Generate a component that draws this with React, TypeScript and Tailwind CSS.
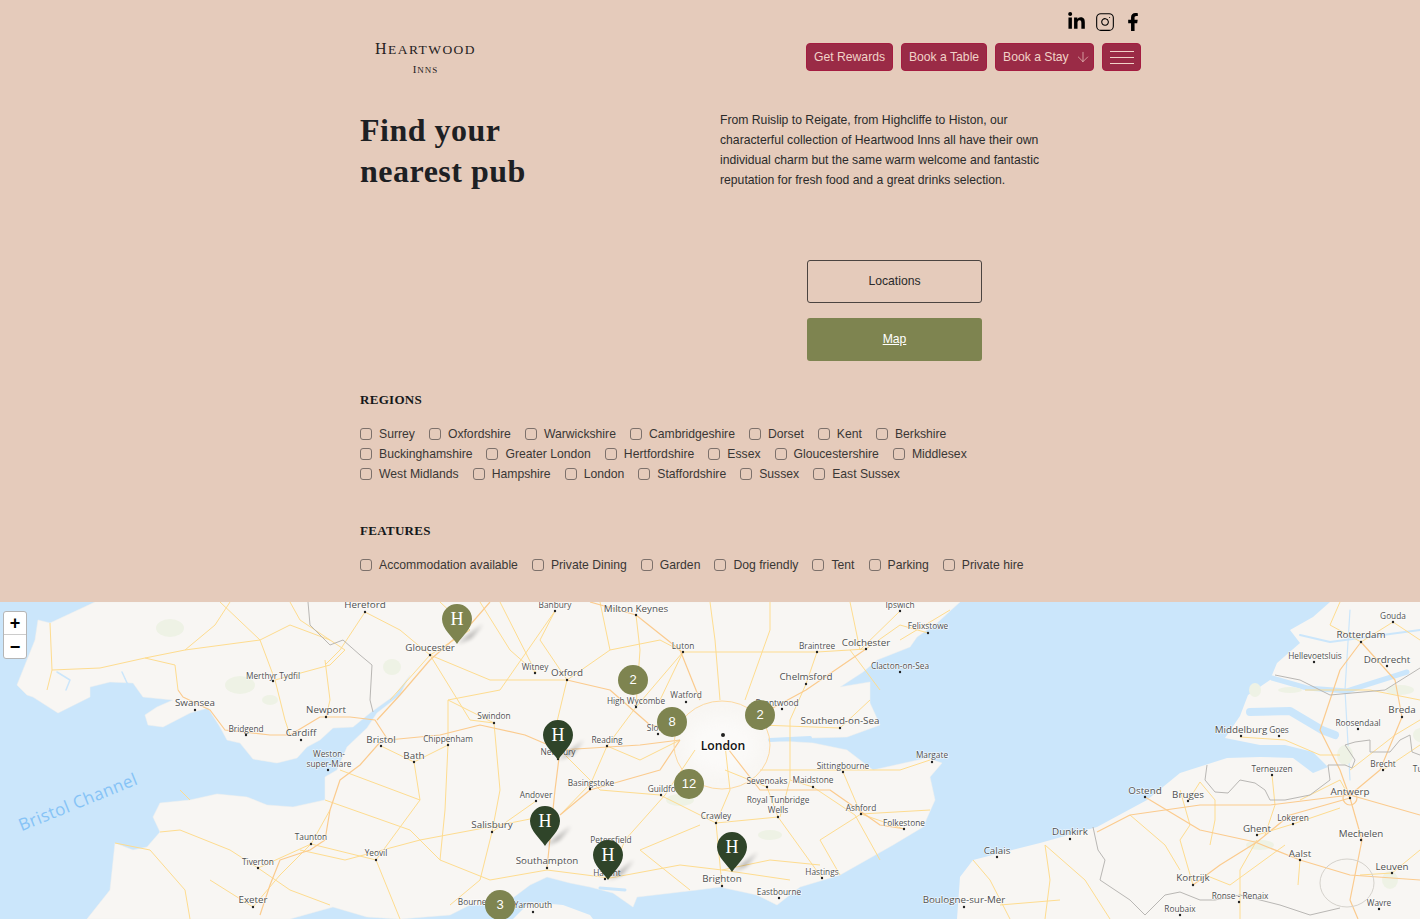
import React from "react";
import { FaFacebookF, FaLinkedinIn } from "react-icons/fa";
import { ArrowDown, Instagram } from "lucide-react";

const regions = [
  ["Surrey", "Oxfordshire", "Warwickshire", "Cambridgeshire", "Dorset", "Kent", "Berkshire"],
  ["Buckinghamshire", "Greater London", "Hertfordshire", "Essex", "Gloucestershire", "Middlesex"],
  ["West Midlands", "Hampshire", "London", "Staffordshire", "Sussex", "East Sussex"],
];

const features = ["Accommodation available", "Private Dining", "Garden", "Dog friendly", "Tent", "Parking", "Private hire"];

const britain =
  "M95 602L50 623L38 620L35 640L17 685L27 695L33 697L58 713L90 697L90 687L110 682L133 683L143 697L173 700L157 707L145 715L148 725L163 727L190 713L208 708L220 727L227 740L240 743L253 759L277 763L297 758L307 747L320 740L333 728L353 727L370 713L395 695L410 675L400 695L377 713L367 728L347 747L337 770L325 777L325 800L293 807L267 805L247 797L217 794L190 800L160 803L153 817L160 832L147 847L133 850L115 843L110 890L87 919L290 919L333 907L367 917L400 919L450 915L470 905L495 905L510 900L530 885L547 877L570 883L590 887L613 893L633 907L637 897L697 890L720 887L757 895L777 905L800 887L840 875L893 845L923 827L935 800L930 777L942 763L927 758L873 770L847 750L813 743L780 741L810 738L847 737L880 725L870 703L870 682L840 687L863 672L877 660L910 647L917 637L937 623L960 602Z";

const continent =
  "M957 919L960 877L973 860L1040 843L1097 827L1147 800L1180 773L1227 758L1260 757L1293 758L1313 773L1328 767L1313 752L1285 745L1260 745L1225 738L1240 716L1248 695L1270 680L1277 663L1300 643L1290 630L1313 617L1330 602L1420 602L1420 919Z";

const motorways = [
  "M178 690L183 697L210 710L225 730L270 735L290 735L320 717L350 717L375 720L388 740L440 735L480 725L525 735L560 750L640 745L680 740",
  "M382 740L360 765L340 780L330 810L325 840L310 850L280 860L270 885L260 915",
  "M377 720L400 695L430 660L470 625L490 602",
  "M725 745L760 790L830 790L880 825L905 829",
  "M560 750L555 790L547 868",
  "M560 815L590 790L660 770L680 740",
  "M1145 797L1200 830L1255 842L1300 860L1350 875L1420 880",
  "M1097 832L1130 815L1200 805L1270 805L1350 795L1420 815",
  "M1193 885L1220 865L1257 842L1290 815L1350 798",
  "M1350 798L1362 840L1350 900L1358 919",
  "M1350 798L1340 770L1320 730L1340 670L1361 642",
  "M1361 642L1395 680L1402 717L1380 770L1350 795",
  "M700 700L680 650L636 615L590 602",
  "M567 680L610 690L650 725L680 730",
  "M760 715L806 690L866 649",
];

const roads = [
  "M50 623L52 670L47 690",
  "M52 670L100 668L145 658L175 665L178 690",
  "M145 658L185 650L215 625L230 602",
  "M185 650L260 640L275 680L285 720L290 735",
  "M275 680L330 665L345 650L330 640L300 620L290 602",
  "M325 660L330 700L326 717",
  "M220 602L260 640L290 625L330 640",
  "M365 612L340 650L325 665",
  "M365 612L400 630L430 655L390 700",
  "M430 655L470 630L440 602",
  "M430 655L490 680L567 680L540 640L555 611",
  "M567 680L555 730L558 759",
  "M300 850L345 860L420 840L500 825L550 815",
  "M160 832L180 830L230 850L258 868L290 890L330 905",
  "M258 868L311 844L330 810",
  "M115 843L150 850L185 890L190 919",
  "M253 907L280 875L311 844",
  "M311 844L376 860L400 919",
  "M376 860L420 800L414 762L381 746",
  "M414 762L448 745L445 810L440 860L490 880",
  "M448 745L448 700L500 690L555 611",
  "M492 832L500 790L494 723L448 700",
  "M492 832L480 880L450 905",
  "M490 880L547 870L610 878L680 865L722 870L790 880",
  "M716 823L730 790L725 745",
  "M722 886L716 823",
  "M610 878L625 840L665 795L695 750",
  "M607 746L591 783L560 815",
  "M607 746L640 760L680 740",
  "M660 795L716 823L778 817L822 878",
  "M778 817L767 787L725 770",
  "M722 870L770 860L820 865",
  "M720 700L715 640L710 602",
  "M745 700L770 630L770 602",
  "M683 652L636 707L607 746",
  "M683 652L817 652L866 649",
  "M817 652L806 684L790 720L790 780L813 787",
  "M866 649L900 625L928 633",
  "M760 725L840 728L870 700",
  "M760 770L840 770L900 770L930 760",
  "M843 772L861 814L904 829",
  "M861 814L930 810",
  "M813 787L855 815L880 860",
  "M636 615L640 650L636 707",
  "M536 801L492 832",
  "M900 611L860 650L850 602",
  "M536 673L500 602",
  "M480 602L510 650L536 673",
  "M600 602L610 650L567 680",
  "M430 655L470 720L494 723",
  "M560 750L600 790L660 795",
  "M640 850L700 825",
  "M640 850L690 890",
  "M790 780L780 817",
  "M840 875L820 840L861 814",
  "M950 610L900 640",
  "M850 650L880 690",
  "M660 700L683 652",
  "M610 650L660 640L683 652",
  "M340 770L420 800",
  "M325 800L410 830L440 860",
  "M210 880L253 907",
  "M180 790L190 800",
  "M973 860L990 880L1010 919",
  "M1045 845L1085 880L1110 919",
  "M1045 845L1050 880L1045 919",
  "M1000 905L1060 900",
  "M1193 885L1180 840L1190 825L1180 790",
  "M1188 801L1200 782L1215 800",
  "M1215 800L1215 820L1210 845",
  "M1272 775L1275 805L1265 835",
  "M1257 835L1293 824L1340 808",
  "M1257 840L1240 870L1240 919",
  "M1300 860L1298 885",
  "M1205 875L1230 885L1285 845",
  "M1350 770L1395 735L1420 720",
  "M1240 737L1285 740L1320 755L1340 755",
  "M1305 690L1370 690L1420 700",
  "M1361 642L1330 625L1340 602",
  "M1361 642L1393 622L1420 640",
  "M1383 770L1420 745",
  "M1392 873L1420 850",
  "M1392 873L1360 875",
  "M1130 815L1165 845L1180 870",
  "M1300 800L1340 780L1350 798",
];

const borders = [
  "M308 602L310 625L330 645L343 640L360 655L372 665L370 700L373 712",
  "M1093 827L1098 850L1105 860L1100 880L1115 890L1130 900L1145 915L1165 895L1180 892L1200 900L1215 900L1240 895L1280 905L1310 915L1340 908",
  "M1207 765L1205 780L1215 792L1228 793L1240 780L1255 783L1265 790L1270 800L1285 800L1310 795L1330 780L1328 765L1345 765L1352 768L1355 760L1345 745L1355 742L1370 740L1370 752L1390 752L1400 740L1410 735L1412 752L1420 755",
  "M1275 675L1300 680L1330 695L1385 690L1420 668",
];

// text, x, baseline y, big (1) or small (0) label, dot x, dot y
const labels: [string, number, number, number, number, number][] = [
  ["Hereford", 365, 608, 1, 365, 612], ["Gloucester", 430, 651, 1, 430, 655], ["Merthyr Tydfil", 273, 679, 0, 273, 681],
  ["Swansea", 195, 706, 1, 195, 710], ["Newport", 326, 713, 1, 326, 717], ["Bridgend", 246, 732, 0, 246, 735],
  ["Cardiff", 301, 736, 1, 301, 740], ["Bristol", 381, 743, 1, 381, 746], ["Chippenham", 448, 742, 0, 448, 745],
  ["Bath", 414, 759, 1, 414, 762], ["Weston-", 329, 757, 0, 0, 0], ["super-Mare", 329, 767, 0, 328, 770],
  ["Taunton", 311, 840, 0, 311, 844], ["Tiverton", 258, 865, 0, 258, 868], ["Yeovil", 376, 856, 0, 376, 860],
  ["Exeter", 253, 903, 1, 253, 907], ["Bournemouth", 485, 905, 0, 0, 0], ["Banbury", 555, 608, 0, 555, 611],
  ["Milton Keynes", 636, 612, 1, 636, 615], ["Ipswich", 900, 608, 0, 900, 611], ["Luton", 683, 649, 0, 683, 652],
  ["Braintree", 817, 649, 0, 817, 652], ["Colchester", 866, 646, 1, 866, 649], ["Felixstowe", 928, 629, 0, 928, 633],
  ["Clacton-on-Sea", 900, 669, 0, 900, 672], ["Witney", 535, 670, 0, 535, 673], ["Oxford", 567, 676, 1, 567, 680],
  ["Chelmsford", 806, 680, 1, 806, 684], ["High Wycombe", 636, 704, 0, 636, 707], ["Watford", 686, 698, 0, 686, 702],
  ["Brentwood", 777, 706, 0, 782, 709], ["Swindon", 494, 719, 0, 494, 723], ["Southend-on-Sea", 840, 724, 1, 840, 728],
  ["Slough", 660, 731, 0, 658, 734], ["Reading", 607, 743, 0, 607, 746], ["Newbury", 558, 755, 0, 558, 759],
  ["Margate", 932, 758, 0, 932, 762], ["Sittingbourne", 843, 769, 0, 843, 772], ["Basingstoke", 591, 786, 0, 590, 789],
  ["Guildford", 666, 792, 0, 661, 795], ["Sevenoaks", 767, 784, 0, 767, 787], ["Maidstone", 813, 783, 0, 813, 787],
  ["Andover", 536, 798, 0, 536, 801], ["Royal Tunbridge", 778, 803, 0, 0, 0], ["Wells", 778, 813, 0, 778, 817],
  ["Ashford", 861, 811, 0, 861, 814], ["Folkestone", 904, 826, 0, 904, 829], ["Crawley", 716, 819, 0, 716, 823],
  ["Salisbury", 492, 828, 1, 492, 832], ["Petersfield", 611, 843, 0, 0, 0], ["Southampton", 547, 864, 1, 547, 868],
  ["Havant", 607, 876, 0, 605, 879], ["Hastings", 822, 875, 0, 822, 878], ["Brighton", 722, 882, 1, 722, 886],
  ["Eastbourne", 779, 895, 0, 779, 898], ["Yarmouth", 533, 908, 0, 533, 912], ["Boulogne-sur-Mer", 964, 903, 1, 964, 907],
  ["Gouda", 1393, 619, 0, 1393, 622], ["Rotterdam", 1361, 638, 1, 1361, 642], ["Hellevoetsluis", 1315, 659, 0, 1314, 662],
  ["Dordrecht", 1387, 663, 1, 1387, 666], ["Breda", 1402, 713, 1, 1402, 717], ["Roosendaal", 1358, 726, 0, 1358, 729],
  ["Middelburg", 1241, 733, 1, 1241, 736], ["Goes", 1279, 733, 0, 1279, 736], ["Brecht", 1383, 767, 0, 1383, 770],
  ["Turnhout", 1431, 772, 0, 0, 0], ["Terneuzen", 1272, 772, 0, 1272, 775], ["Antwerp", 1350, 795, 1, 1350, 798],
  ["Ostend", 1145, 794, 1, 1145, 797], ["Bruges", 1188, 798, 1, 1188, 801], ["Lokeren", 1293, 821, 0, 1293, 824],
  ["Dunkirk", 1070, 835, 1, 1070, 839], ["Mechelen", 1361, 837, 1, 1361, 840], ["Ghent", 1257, 832, 1, 1257, 835],
  ["Calais", 997, 854, 1, 997, 857], ["Aalst", 1300, 857, 1, 1300, 860], ["Leuven", 1392, 870, 1, 1392, 873],
  ["Kortrijk", 1193, 881, 1, 1193, 885], ["Ronse - Renaix", 1240, 899, 0, 1239, 902], ["Wavre", 1379, 906, 0, 1379, 909],
  ["Roubaix", 1180, 912, 0, 1180, 915],
];

const greens: [number, number, number, number][] = [
  [170, 628, 14, 9], [240, 685, 15, 9], [392, 667, 9, 8], [270, 700, 8, 5], [680, 800, 14, 6], [770, 835, 12, 5],
  [1260, 845, 14, 5], [1290, 690, 12, 3], [1255, 690, 6, 7], [1345, 755, 8, 10], [1400, 690, 14, 5], [1390, 880, 8, 9], [1425, 735, 12, 8],
];

const clusters: [string, number, number][] = [["2", 633, 680], ["8", 672, 722], ["2", 760, 715], ["12", 689, 784], ["3", 500, 905]];

const pins: [number, number, string][] = [
  [457, 644, "#7e8450"], [558, 760, "#2f4429"], [545, 846, "#2f4429"], [608, 880, "#2f4429"], [732, 872, "#2f4429"],
];

const Check = ({ label }: { label: string }) => (
  <label className="flex items-center gap-[7px] whitespace-nowrap text-[#3a3735]">
    <span className="w-[12px] h-[12px] rounded-[3px] border border-[#7d716b] shrink-0" />
    <span>{label}</span>
  </label>
);

const MapCanvas = () => (
  <svg viewBox="0 602 1420 317" className="block w-full h-full">
    <defs>
      <filter id="pinBlur" x="-50%" y="-50%" width="200%" height="200%">
        <feGaussianBlur stdDeviation="2" />
      </filter>
      <filter id="cityGlow" x="-20%" y="-20%" width="140%" height="140%">
        <feGaussianBlur stdDeviation="8" />
      </filter>
    </defs>
    <rect x="0" y="602" width="1420" height="317" fill="#cbe6fb" />
    <path d={britain} fill="#f8f6f3" stroke="#f3f1ec" strokeWidth="0.5" />
    <path d="M513 919L530 902L563 905L590 915L593 919Z" fill="#f8f6f3" />
    <path d={continent} fill="#f8f6f3" />
    <g fill="none" stroke="#cbe6fb" strokeLinecap="round" strokeLinejoin="round">
      <path d="M1250 712L1290 711L1322 730L1335 735" strokeWidth="8" />
      <path d="M1272 678L1307 688L1347 691L1407 672" strokeWidth="5" />
      <path d="M1300 635L1330 642L1420 630" strokeWidth="2" />
      <path d="M1350 610L1345 690L1350 780" strokeWidth="1.2" />
      <path d="M770 740L810 738" strokeWidth="4" />
      <path d="M57 672L70 680L66 690M122 672L128 685" strokeWidth="1.5" />
      <path d="M600 888L625 890" strokeWidth="3" />
    </g>
    {greens.map(([cx, cy, rx, ry], i) => (
      <ellipse key={i} cx={cx} cy={cy} rx={rx} ry={ry} fill="#eef2e5" />
    ))}
    <ellipse cx="722" cy="745" rx="36" ry="28" fill="#ffffff" opacity="0.45" filter="url(#cityGlow)" />
    <g fill="none" stroke="#fedc8f" strokeWidth="1" strokeLinejoin="round">
      {roads.map((d, i) => (
        <path key={i} d={d} />
      ))}
    </g>
    <g fill="none" stroke="#fbcb8e" strokeWidth="1.2" strokeLinejoin="round">
      {motorways.map((d, i) => (
        <path key={i} d={d} />
      ))}
      <circle cx="1350" cy="798" r="7" />
    </g>
    <ellipse cx="722" cy="745" rx="48" ry="44" fill="none" stroke="#fdd9a0" strokeWidth="1" />
    <g fill="none" stroke="#b9b7b4" strokeWidth="1" strokeLinejoin="round">
      {borders.map((d, i) => (
        <path key={i} d={d} />
      ))}
      <ellipse cx="1347" cy="883" rx="27" ry="24" stroke="#d5d2cc" />
    </g>
    <text
      x="78"
      y="808"
      textAnchor="middle"
      transform="rotate(-22 78 802)"
      className="font-['Open_Sans',sans-serif] text-[17px] tracking-[0.4px]"
      fill="#86c3f6"
    >
      Bristol Channel
    </text>
    <g className="font-['Open_Sans',sans-serif]" textAnchor="middle">
      {labels.map(([text, x, y, big, dx, dy]) => (
        <g key={text}>
          <text x={x} y={y} fontSize={big ? 9.8 : 8.3} fill="#4f4f4f" stroke="#ffffff" strokeWidth="1.2" paintOrder="stroke" strokeOpacity="0.8">
            {text}
          </text>
          {dx > 0 && <circle cx={dx} cy={dy} r="1.2" fill="#222222" />}
        </g>
      ))}
      <circle cx="723" cy="735" r="2" fill="#222222" />
      <text x="723" y="750" fontSize="12.2" fontWeight="600" fill="#111111" stroke="#ffffff" strokeWidth="1.6" paintOrder="stroke">
        London
      </text>
    </g>
    {pins.map(([x, y, fill]) => (
      <g key={x}>
        <path
          d={`M${x} ${y}L${x + 16} ${y - 12}L${x + 26} ${y - 20}L${x + 14} ${y - 6}Z`}
          fill="#000000"
          opacity="0.35"
          filter="url(#pinBlur)"
        />
        <path
          d={`M${x} ${y}C${x - 5} ${y - 8} ${x - 15} ${y - 15} ${x - 15} ${y - 25}A15 15 0 1 1 ${x + 15} ${y - 25}C${x + 15} ${y - 15} ${x + 5} ${y - 8} ${x} ${y}Z`}
          fill={fill}
        />
        <text x={x} y={y - 19} textAnchor="middle" fontSize="18" fill="#ffffff" className="font-['Liberation_Serif',serif]">
          H
        </text>
      </g>
    ))}
  </svg>
);

export default function App() {
  return (
    <div className="h-[919px] overflow-hidden bg-[#e5cbbb] font-['Liberation_Sans',Arial,sans-serif] text-[12.2px] text-[#2a2a2a]">
      <div className="ml-[360px] w-[781px]">
        <header className="h-[110px] flex justify-between">
          <div className="ml-[14px] mt-[41px] w-[103px] h-[34px] flex flex-col items-center font-['Liberation_Serif',serif] text-[#26221f]">
            <div className="text-[16px] leading-[15px] tracking-[1.45px] whitespace-nowrap">
              H<span className="text-[13.5px]">EARTWOOD</span>
            </div>
            <div className="w-[28px] h-px bg-[#8f8278] mt-[4px]" />
            <div className="text-[11px] leading-[11px] mt-[3px] tracking-[1px]">
              I<span className="text-[9px]">NNS</span>
            </div>
          </div>
          <div className="flex flex-col items-end">
            <div className="h-[43px] pt-[12px] flex items-start gap-[9px] text-black">
              <FaLinkedinIn className="w-[19px] h-[19px]" />
              <Instagram className="w-[20px] h-[20px]" strokeWidth={1.3} />
              <FaFacebookF className="w-[18px] h-[18px] mt-[1px] mr-[-1px]" />
            </div>
            <div className="flex gap-[8px] text-[#f1d3c8]">
              <button className="h-[28px] w-[87px] rounded-[4px] bg-[#9a2b46] border border-[#a41c40]">Get Rewards</button>
              <button className="h-[28px] w-[86px] rounded-[4px] bg-[#9a2b46] border border-[#a41c40]">Book a Table</button>
              <button className="h-[28px] w-[99px] pl-[7px] rounded-[4px] bg-[#9a2b46] border border-[#a41c40] flex items-center gap-[6px]">
                Book a Stay
                <ArrowDown className="w-[16px] h-[16px]" strokeWidth={1} />
              </button>
              <button className="w-[39px] h-[28px] rounded-[4px] bg-[#9a2b46] border border-[#a41c40] flex flex-col items-center justify-center gap-[5px]">
                <span className="w-[24px] h-px bg-[#f1d3c8]" />
                <span className="w-[24px] h-px bg-[#f1d3c8]" />
                <span className="w-[24px] h-px bg-[#f1d3c8]" />
              </button>
            </div>
          </div>
        </header>

        <section className="flex h-[150px]">
          <h1 className="w-[360px] font-['Liberation_Serif',serif] font-bold text-[32px] leading-[41px] tracking-[0.5px] text-[#1d2023]">
            Find your
            <br />
            nearest pub
          </h1>
          <p className="w-[325px] leading-[20px]">
            From Ruislip to Reigate, from Highcliffe to Histon, our characterful collection of Heartwood Inns all have their own
            individual charm but the same warm welcome and fantastic reputation for fresh food and a great drinks selection.
          </p>
        </section>

        <div className="ml-[447px] w-[175px] flex flex-col gap-[15px]">
          <button className="h-[43px] rounded-[3px] border border-[#4b4440]">Locations</button>
          <button className="h-[43px] rounded-[3px] bg-[#7e8450] text-white underline">Map</button>
        </div>

        <h2 className="mt-[30px] font-['Liberation_Serif',serif] font-bold text-[13px] leading-[17px] tracking-[0.3px] text-[#15181a]">REGIONS</h2>
        <div className="mt-[16px] flex flex-col">
          {regions.map((row, i) => (
            <div key={i} className="h-[20px] flex items-center gap-[14px]">
              {row.map((r) => (
                <Check key={r} label={r} />
              ))}
            </div>
          ))}
        </div>

        <h2 className="mt-[38px] font-['Liberation_Serif',serif] font-bold text-[13px] leading-[17px] tracking-[0.3px] text-[#15181a]">FEATURES</h2>
        <div className="mt-[16px] h-[20px] flex items-center gap-[14px]">
          {features.map((f) => (
            <Check key={f} label={f} />
          ))}
        </div>
      </div>

      <div className="relative mt-[27px] h-[317px] overflow-hidden">
        <MapCanvas />
        <div className="absolute left-[3px] top-[9px] w-[24px] rounded-[3px] border border-[#b5b5b5] bg-white flex flex-col text-black font-bold">
          <div className="h-[23px] flex items-center justify-center text-[18px] leading-none border-b border-[#cccccc]">+</div>
          <div className="h-[23px] flex items-center justify-center text-[18px] leading-none">−</div>
        </div>
        {clusters.map(([n, x, y]) => (
          <div
            key={x}
            className="absolute w-[30px] h-[30px] rounded-full bg-[#7e8450] text-white text-[13px] flex items-center justify-center"
            style={{ left: x - 15, top: y - 15 - 602 }}
          >
            {n}
          </div>
        ))}
      </div>
    </div>
  );
}
